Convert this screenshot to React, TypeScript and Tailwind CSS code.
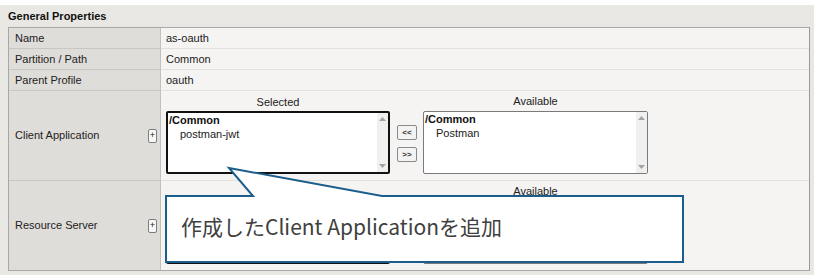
import React from "react";

function ListBox({
  selected,
  item,
  covered,
}: {
  selected?: boolean;
  item?: string;
  covered?: boolean;
}) {
  return (
    <div
      className={
        "relative h-[63px] w-full bg-white rounded-[2px] flex " +
        (selected ? "border-2 border-[#111]" : "border border-[#7a7a7a]")
      }
    >
      <div className="flex-1 pl-[1px] pt-0 leading-[14px]">
        {covered ? null : <div className="font-bold text-[#111]">/Common</div>}
        {item ? <div className="pl-[11px] text-[#222]">{item}</div> : null}
      </div>
      <div className="w-[11px] bg-[#f0f0f0] flex flex-col justify-between items-center py-[4px]">
        <svg width="7" height="4" viewBox="0 0 7 4">
          <polygon points="0,4 7,4 3.5,0" fill="#a3a3a3" />
        </svg>
        <svg width="7" height="4" viewBox="0 0 7 4">
          <polygon points="0,0 7,0 3.5,4" fill="#a3a3a3" />
        </svg>
      </div>
    </div>
  );
}

function SmallBtn({ label }: { label: string }) {
  return (
    <div className="w-[20px] h-[15px] rounded-[2px] border border-[#8a8a8a] bg-[#f3f3f3] flex items-center justify-center text-[8px] leading-none text-[#333] font-bold">
      {label}
    </div>
  );
}

function Plus() {
  return (
    <div className="w-[9px] h-[14px] rounded-[2px] border border-[#7d7d7d] bg-[#f7f7f7] flex items-center justify-center text-[9px] leading-none text-[#222]">
      +
    </div>
  );
}

function Swap({
  selItem,
  avItem,
  covered,
}: {
  selItem?: string;
  avItem?: string;
  covered?: boolean;
}) {
  return (
    <div className="flex pl-[5px] pt-[4px]">
      <div className="w-[224px] flex flex-col">
        <div className="h-[14px] leading-[14px] text-center text-[#222]">
          {covered ? "" : "Selected"}
        </div>
        <div className="mt-[2px]">
          <ListBox selected item={selItem} covered={covered} />
        </div>
      </div>
      <div className="ml-[7px] mt-[30px] flex flex-col gap-[7px]">
        <SmallBtn label={covered ? "" : "<<"} />
        <SmallBtn label={covered ? "" : ">>"} />
      </div>
      <div className="ml-[6px] w-[225px] flex flex-col">
        <div className="h-[14px] leading-[13px] text-center text-[#222]">
          Available
        </div>
        <div className="mt-[2px]">
          <ListBox item={avItem} covered={covered} />
        </div>
      </div>
    </div>
  );
}

function Row({
  label,
  h,
  last,
  plus,
  children,
}: {
  label: string;
  h: string;
  last?: boolean;
  plus?: boolean;
  children: React.ReactNode;
}) {
  return (
    <div className={"flex " + h}>
      <div
        className={
          "w-[152px] bg-[#dfddd9] border-r border-[#c2c0bc] pl-[6px] pr-[3px] flex items-center justify-between " +
          (last ? "" : "border-b border-b-[#c9c7c3]")
        }
      >
        <span>{label}</span>
        {plus ? <Plus /> : null}
      </div>
      <div
        className={
          "flex-1 bg-[#f5f4f2] " +
          (last ? "" : "border-b border-[#e2e1de]")
        }
      >
        {children}
      </div>
    </div>
  );
}

export default function App() {
  return (
    <div className="relative w-[817px] h-[277px] bg-white overflow-hidden font-['Liberation_Sans',Arial,sans-serif] text-[11px] text-[#222]">
      <div className="mt-[5px] w-[814px] h-[270px] bg-[#e8e7e3] pl-[8px]">
        <div className="h-[22px] flex items-center font-bold text-[#111]">
          General Properties
        </div>
        <div className="w-[802px] border border-[#a8a7a3] border-r-[#9a9995]">
          <Row label="Name" h="h-[21px]">
            <div className="h-full flex items-center pl-[5px]">as-oauth</div>
          </Row>
          <Row label="Partition / Path" h="h-[21px]">
            <div className="h-full flex items-center pl-[5px]">Common</div>
          </Row>
          <Row label="Parent Profile" h="h-[21px]">
            <div className="h-full flex items-center pl-[5px]">oauth</div>
          </Row>
          <Row label="Client Application" h="h-[90px]" plus>
            <Swap selItem="postman-jwt" avItem="Postman" />
          </Row>
          <Row label="Resource Server" h="h-[89px]" plus last>
            <Swap covered />
          </Row>
        </div>
      </div>

      <svg
        className="absolute left-0 top-0 pointer-events-none"
        width="817"
        height="277"
        viewBox="0 0 817 277"
      >
        <polygon
          points="166,196 253,196 229,168 382,196 683,196 683,262 166,262"
          fill="#ffffff"
          stroke="#1c5e8b"
          strokeWidth="2"
          strokeLinejoin="miter"
        />
      </svg>
      <div className="absolute left-[181px] top-[211px] text-[21px] leading-[30px] text-[#404040] font-['Noto_Sans_CJK_JP','Noto_Sans',sans-serif] whitespace-nowrap">
        作成したClient Applicationを追加
      </div>
    </div>
  );
}
